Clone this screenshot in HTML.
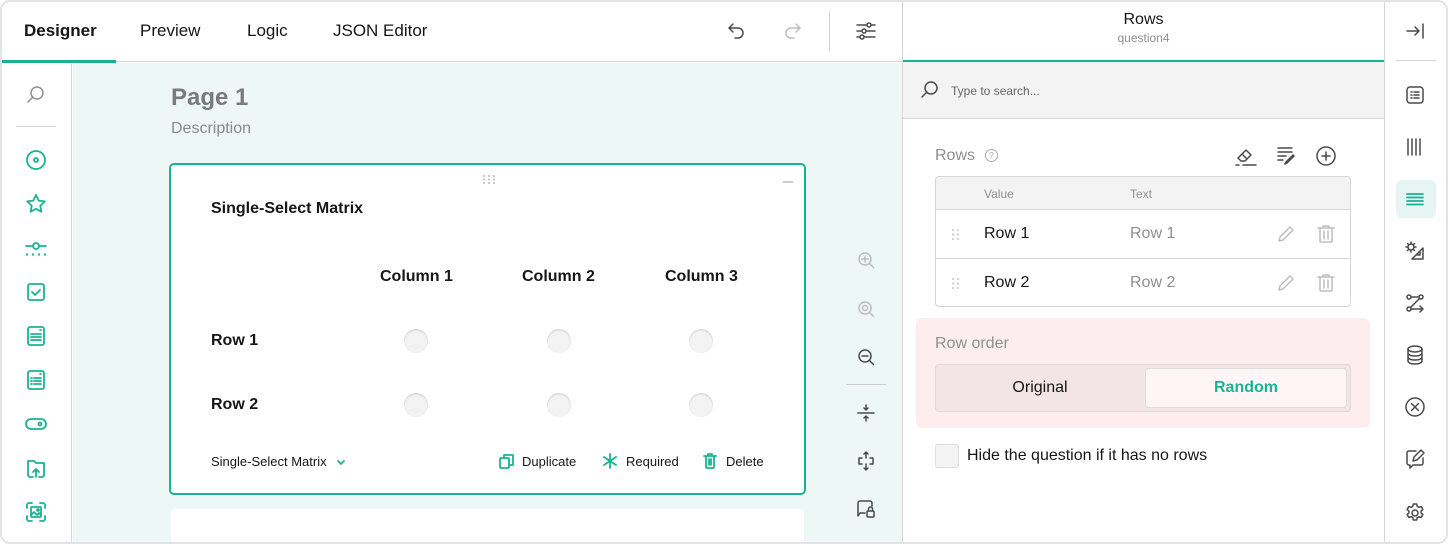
<!DOCTYPE html>
<html><head><meta charset="utf-8"><style>
*{box-sizing:border-box;margin:0;padding:0}
body{width:1448px;height:544px;overflow:hidden;background:#fff;font-family:"Liberation Sans",sans-serif;color:#161616;position:relative}
.a{position:absolute}
.frame{position:absolute;left:0;top:0;width:1448px;height:544px;border:2px solid #e4e4e4;border-radius:10px;pointer-events:none;z-index:10}
svg{position:absolute;fill:none;stroke-linecap:round;stroke-linejoin:round}
.g{stroke:#19b394;stroke-width:1.8}
.d{stroke:#4a4a4a;stroke-width:1.5}
.l{stroke:#bdbdbd;stroke-width:1.5}
</style></head><body>
<!-- header -->
<div class="a" style="left:0;top:0;width:902px;height:62px;border-bottom:1px solid #d6d6d6;background:#fff"></div>
<div class="a" style="left:0;top:60px;width:116px;height:3px;background:#19b394"></div>
<div class="a" style="left:24px;top:21px;font-size:17px;font-weight:bold">Designer</div>
<div class="a" style="left:140px;top:21px;font-size:17px">Preview</div>
<div class="a" style="left:247px;top:21px;font-size:17px">Logic</div>
<div class="a" style="left:333px;top:21px;font-size:17px">JSON Editor</div>
<svg style="left:724px;top:20px" width="24" height="24" class="d"><path d="M5 8h9a5 5 0 0 1 0 10h-3M5 8l4-4M5 8l4 4"/></svg>
<svg style="left:781px;top:20px" width="24" height="24" class="l"><path d="M19 8h-9a5 5 0 0 0 0 10h3M19 8l-4-4M19 8l-4 4"/></svg>
<div class="a" style="left:829px;top:11px;width:1px;height:40px;background:#d6d6d6"></div>
<svg style="left:854px;top:19px" width="24" height="24" class="d"><path d="M3 6h18M3 12h18M3 18h18"/><circle cx="15" cy="6" r="2" fill="#fff"/><circle cx="10" cy="12" r="2" fill="#fff"/><circle cx="8" cy="18" r="2" fill="#fff"/></svg>
<!-- left toolbar -->
<div class="a" style="left:0;top:63px;width:72px;height:481px;background:#fff;border-right:1px solid #d6d6d6"></div>
<svg style="left:24px;top:83px" width="24" height="24"><circle cx="13" cy="10" r="6" stroke="#909090" stroke-width="1.5"/><path d="M9 14l-5 5" stroke="#909090" stroke-width="1.5"/></svg>
<div class="a" style="left:16px;top:126px;width:40px;height:1px;background:#d6d6d6"></div>
<svg style="left:24px;top:148px" width="24" height="24" class="g"><circle cx="12" cy="12" r="9"/><circle cx="12" cy="12" r="2"/></svg>
<svg style="left:24px;top:192px" width="24" height="24" class="g"><path d="M12 3l2.7 5.6 6.1.8-4.5 4.2 1.1 6.1L12 16.8l-5.4 2.9 1.1-6.1-4.5-4.2 6.1-.8z"/></svg>
<svg style="left:24px;top:236px" width="24" height="24" class="g"><path d="M2 10h7M15 10h7M3 18v1M9 18v1M15 18v1M21 18v1"/><circle cx="12" cy="10" r="3"/></svg>
<svg style="left:24px;top:280px" width="24" height="24" class="g"><rect x="4" y="4" width="16" height="16" rx="2"/><path d="M8 12l3 3 5-5"/></svg>
<svg style="left:24px;top:324px" width="24" height="24" class="g"><rect x="4" y="3" width="16" height="18" rx="2"/><path d="M7 10h10M7 13h10M7 16h10M16 6h1"/></svg>
<svg style="left:24px;top:368px" width="24" height="24" class="g"><rect x="4" y="3" width="16" height="18" rx="2"/><path d="M7 10h1M10 10h7M7 13h1M10 13h7M7 16h1M10 16h7M16 6h1"/></svg>
<svg style="left:24px;top:412px" width="24" height="24" class="g"><rect x="2" y="7" width="20" height="10" rx="5"/><circle cx="16" cy="12" r="1.5"/></svg>
<svg style="left:24px;top:456px" width="24" height="24" class="g"><path d="M4 5h6l2 2h8v12a2 2 0 0 1-2 2h-3M9 21H6a2 2 0 0 1-2-2V5M12 21v-8M9 16l3-3 3 3"/></svg>
<svg style="left:24px;top:500px" width="24" height="24" class="g"><path d="M3 8V5a2 2 0 0 1 2-2h3M16 3h3a2 2 0 0 1 2 2v3M21 16v3a2 2 0 0 1-2 2h-3M8 21H5a2 2 0 0 1-2-2v-3"/><rect x="7" y="7" width="10" height="10" rx="1"/><path d="M7 15l3-3 3 3 2-2 2 2"/><circle cx="14" cy="10" r="1"/></svg>
<!-- canvas -->
<div class="a" style="left:73px;top:63px;width:829px;height:481px;background:#edf7f5"></div>
<div class="a" style="left:171px;top:84px;font-size:24px;font-weight:bold;color:#7a7a7a">Page 1</div>
<div class="a" style="left:171px;top:120px;font-size:16px;color:#8a8a8a">Description</div>
<div class="a" style="left:169px;top:163px;width:637px;height:332px;background:#fff;border:2px solid #19b394;border-radius:5px"></div>
<svg style="left:481px;top:174px" width="16" height="10"><g fill="#bbb"><circle cx="3" cy="2" r="1"/><circle cx="8" cy="2" r="1"/><circle cx="13" cy="2" r="1"/><circle cx="3" cy="5.5" r="1"/><circle cx="8" cy="5.5" r="1"/><circle cx="13" cy="5.5" r="1"/><circle cx="3" cy="9" r="1"/><circle cx="8" cy="9" r="1"/><circle cx="13" cy="9" r="1"/></g></svg>
<div class="a" style="left:783px;top:181px;width:10px;height:2px;background:#ccc"></div>
<div class="a" style="left:211px;top:200px;font-size:16px;font-weight:600">Single-Select Matrix</div>
<div class="a" style="left:380px;top:268px;font-size:16px;font-weight:600">Column 1</div>
<div class="a" style="left:522px;top:268px;font-size:16px;font-weight:600">Column 2</div>
<div class="a" style="left:665px;top:268px;font-size:16px;font-weight:600">Column 3</div>
<div class="a" style="left:211px;top:332px;font-size:16px;font-weight:600">Row 1</div>
<div class="a" style="left:211px;top:396px;font-size:16px;font-weight:600">Row 2</div>
<div class="a" style="left:404px;top:329px;width:24px;height:24px;border-radius:50%;background:#f3f3f3;box-shadow:inset 0 1px 2px rgba(0,0,0,.15)"></div>
<div class="a" style="left:547px;top:329px;width:24px;height:24px;border-radius:50%;background:#f3f3f3;box-shadow:inset 0 1px 2px rgba(0,0,0,.15)"></div>
<div class="a" style="left:689px;top:329px;width:24px;height:24px;border-radius:50%;background:#f3f3f3;box-shadow:inset 0 1px 2px rgba(0,0,0,.15)"></div>
<div class="a" style="left:404px;top:393px;width:24px;height:24px;border-radius:50%;background:#f3f3f3;box-shadow:inset 0 1px 2px rgba(0,0,0,.15)"></div>
<div class="a" style="left:547px;top:393px;width:24px;height:24px;border-radius:50%;background:#f3f3f3;box-shadow:inset 0 1px 2px rgba(0,0,0,.15)"></div>
<div class="a" style="left:689px;top:393px;width:24px;height:24px;border-radius:50%;background:#f3f3f3;box-shadow:inset 0 1px 2px rgba(0,0,0,.15)"></div>
<div class="a" style="left:211px;top:454px;font-size:13px">Single-Select Matrix</div>
<svg style="left:335px;top:456px" width="12" height="12" class="g"><path d="M3 5l3 3 3-3"/></svg>
<svg style="left:498px;top:452px" width="18" height="18" class="g"><rect x="2" y="6" width="9" height="10" rx="1"/><path d="M6 6V3h9v10h-4"/></svg>
<div class="a" style="left:522px;top:454px;font-size:13px">Duplicate</div>
<svg style="left:601px;top:452px" width="18" height="18" class="g"><path d="M9 2v14M3 5l12 8M15 5L3 13"/></svg>
<div class="a" style="left:626px;top:454px;font-size:13px">Required</div>
<svg style="left:701px;top:452px" width="18" height="18" class="g"><path d="M3 4h12M7 4V2h4v2M5 4v11a1 1 0 0 0 1 1h6a1 1 0 0 0 1-1V4M8 7v6M10 7v6"/></svg>
<div class="a" style="left:726px;top:454px;font-size:13px">Delete</div>
<div class="a" style="left:171px;top:509px;width:633px;height:40px;background:#fff;border-radius:4px"></div>
<!-- zoom tools -->
<svg style="left:854px;top:248px" width="24" height="24" class="l"><circle cx="11" cy="11" r="6"/><path d="M15.5 15.5l4 4M11 8v6M8 11h6"/></svg>
<svg style="left:854px;top:297px" width="24" height="24" class="l"><circle cx="11" cy="11" r="6"/><circle cx="11" cy="11" r="2.5"/><path d="M15.5 15.5l4 4"/></svg>
<svg style="left:854px;top:345px" width="24" height="24" class="d"><circle cx="11" cy="11" r="6"/><path d="M15.5 15.5l4 4M8 11h6"/></svg>
<div class="a" style="left:846px;top:384px;width:40px;height:1px;background:#ccc"></div>
<svg style="left:854px;top:401px" width="24" height="24" class="d"><path d="M4 12h16M12 4v5M10 7l2 2 2-2M12 20v-5M10 17l2-2 2 2"/></svg>
<svg style="left:854px;top:449px" width="24" height="24" class="d"><path d="M12 3v6M10 5l2-2 2 2M12 21v-6M10 19l2 2 2-2M8 9H5v6h3M16 9h3v6h-3"/></svg>
<svg style="left:854px;top:497px" width="24" height="24" class="d"><path d="M11 16H6l-2 3V6a2 2 0 0 1 2-2h10a2 2 0 0 1 2 2v3"/><rect x="13" y="14" width="7" height="6" rx="1"/><path d="M14.5 14v-2a2 2 0 0 1 4 0v2"/></svg>
<!-- right panel -->
<div class="a" style="left:902px;top:0;width:1px;height:544px;background:#d6d6d6"></div>
<div class="a" style="left:903px;top:0;width:481px;height:60px;background:#fff;text-align:center">
 <div style="margin-top:11px;font-size:16px">Rows</div>
 <div style="font-size:12px;color:#909090;margin-top:2px">question4</div>
</div>
<div class="a" style="left:903px;top:60px;width:481px;height:2px;background:#19b394"></div>
<div class="a" style="left:903px;top:62px;width:481px;height:57px;background:#f3f3f3;border-bottom:1px solid #d6d6d6"></div>
<svg style="left:918px;top:78px" width="24" height="24" class="d"><circle cx="13" cy="10" r="6"/><path d="M9 14l-5 5"/></svg>
<div class="a" style="left:951px;top:84px;font-size:12px;color:#666">Type to search...</div>
<div class="a" style="left:935px;top:147px;font-size:16px;color:#909090">Rows</div>
<div class="a" style="left:985px;top:149px;width:13px;height:13px;border:1.3px solid #aaa;border-radius:50%;font-size:8px;color:#aaa;text-align:center;line-height:11px">?</div>
<svg style="left:1233px;top:144px" width="26" height="24" class="d"><path d="M5 14l8-8 5 5-6 6H8zM9 10l5 5M3 21h3M10 21h13"/></svg>
<svg style="left:1275px;top:144px" width="24" height="24" class="d"><path d="M3 4h14M3 8h14M3 12h8M3 16h5M19 12l-7 7-2 1 1-2 7-7z"/></svg>
<svg style="left:1314px;top:144px" width="24" height="24" class="d"><circle cx="12" cy="12" r="9"/><path d="M12 8v8M8 12h8"/></svg>
<div class="a" style="left:935px;top:176px;width:416px;height:131px;border:1px solid #d6d6d6;border-radius:4px;overflow:hidden">
 <div style="height:33px;background:#f3f3f3;border-bottom:1px solid #d6d6d6;font-size:12px;color:#909090;position:relative"><span class="a" style="left:48px;top:10px">Value</span><span class="a" style="left:194px;top:10px">Text</span></div>
 <div style="height:49px;border-bottom:1px solid #d6d6d6;position:relative;font-size:16px"><span class="a" style="left:48px;top:15px">Row 1</span><span class="a" style="left:194px;top:15px;color:#909090">Row 1</span></div>
 <div style="height:48px;position:relative;font-size:16px"><span class="a" style="left:48px;top:15px">Row 2</span><span class="a" style="left:194px;top:15px;color:#909090">Row 2</span></div>
</div>
<svg style="left:951px;top:228px" width="10" height="14"><g fill="#c8c8c8"><circle cx="2" cy="2" r="1"/><circle cx="7" cy="2" r="1"/><circle cx="2" cy="6.5" r="1"/><circle cx="7" cy="6.5" r="1"/><circle cx="2" cy="11" r="1"/><circle cx="7" cy="11" r="1"/></g></svg>
<svg style="left:951px;top:277px" width="10" height="14"><g fill="#c8c8c8"><circle cx="2" cy="2" r="1"/><circle cx="7" cy="2" r="1"/><circle cx="2" cy="6.5" r="1"/><circle cx="7" cy="6.5" r="1"/><circle cx="2" cy="11" r="1"/><circle cx="7" cy="11" r="1"/></g></svg>
<svg style="left:1275px;top:223px" width="22" height="22" class="l"><path d="M15 4l3 3-10 10-4 1 1-4z"/></svg>
<svg style="left:1315px;top:223px" width="22" height="22" class="l"><path d="M3 5h16M8 5V3h6v2M5 5v13a1 1 0 0 0 1 1h10a1 1 0 0 0 1-1V5M9 8v8M13 8v8"/></svg>
<svg style="left:1275px;top:272px" width="22" height="22" class="l"><path d="M15 4l3 3-10 10-4 1 1-4z"/></svg>
<svg style="left:1315px;top:272px" width="22" height="22" class="l"><path d="M3 5h16M8 5V3h6v2M5 5v13a1 1 0 0 0 1 1h10a1 1 0 0 0 1-1V5M9 8v8M13 8v8"/></svg>
<div class="a" style="left:916px;top:318px;width:454px;height:110px;background:#fdedef;border-radius:6px"></div>
<div class="a" style="left:935px;top:335px;font-size:16px;color:#909090">Row order</div>
<div class="a" style="left:935px;top:364px;width:416px;height:48px;background:#f3e4e6;border:1px solid #ddd;border-radius:4px"></div>
<div class="a" style="left:935px;top:379px;width:210px;text-align:center;font-size:16px">Original</div>
<div class="a" style="left:1145px;top:368px;width:202px;height:40px;background:#fff5f6;border:1px solid #ddd;border-radius:4px;text-align:center;line-height:38px;font-size:16px;font-weight:600;color:#19b394">Random</div>
<div class="a" style="left:935px;top:444px;width:24px;height:24px;background:#f3f3f3;border:1px solid #ddd;border-radius:3px"></div>
<div class="a" style="left:967px;top:447px;font-size:16px">Hide the question if it has no rows</div>
<!-- right icon bar -->
<div class="a" style="left:1384px;top:0;width:1px;height:544px;background:#d6d6d6"></div>
<svg style="left:1403px;top:19px" width="24" height="24" class="d"><path d="M4 12h12M12 8l4 4-4 4M20 5v14"/></svg>
<div class="a" style="left:1396px;top:60px;width:40px;height:1px;background:#d6d6d6"></div>
<svg style="left:1403px;top:83px" width="24" height="24" class="d"><rect x="4" y="4" width="16" height="16" rx="3"/><path d="M8 9h1M11 9h5M8 12h1M11 12h5M8 15h1M11 15h5"/></svg>
<svg style="left:1403px;top:135px" width="24" height="24" class="d"><path d="M5 4v16M9 4v16M13 4v16M17 4v16"/></svg>
<div class="a" style="left:1396px;top:180px;width:40px;height:38px;background:#e6f5f1;border-radius:6px"></div>
<svg style="left:1403px;top:187px" width="24" height="24" class="g"><path d="M4 7h16M4 10.5h16M4 14h16M4 17.5h16"/></svg>
<svg style="left:1403px;top:239px" width="24" height="24" class="d"><path d="M20 9v11H9zM14 16h3v-3"/><circle cx="8" cy="8" r="3"/><path d="M8 3v2M8 11v2M3 8h2M11 8h2M4.5 4.5l1.4 1.4M10.1 10.1l1.4 1.4M4.5 11.5l1.4-1.4M10.1 5.9l1.4-1.4"/></svg>
<svg style="left:1403px;top:291px" width="24" height="24" class="d"><circle cx="6" cy="6" r="2"/><circle cx="18" cy="6" r="2"/><circle cx="6" cy="18" r="2"/><path d="M8 6h8M16.5 7.5L7.5 16.5M8 18h12M17 15l3 3-3 3"/></svg>
<svg style="left:1403px;top:343px" width="24" height="24" class="d"><ellipse cx="12" cy="6" rx="7" ry="3"/><path d="M5 6v12c0 1.7 3 3 7 3s7-1.3 7-3V6M5 10c0 1.7 3 3 7 3s7-1.3 7-3M5 14c0 1.7 3 3 7 3s7-1.3 7-3"/></svg>
<svg style="left:1403px;top:395px" width="24" height="24" class="d"><circle cx="12" cy="12" r="9"/><path d="M8.5 8.5l7 7M15.5 8.5l-7 7"/></svg>
<svg style="left:1403px;top:447px" width="24" height="24" class="d"><path d="M13 4H6a2 2 0 0 0-2 2v10a2 2 0 0 0 2 2h1v3l3-3h8a2 2 0 0 0 2-2v-5M18 3l3 3-7 7-4 1 1-4z"/></svg>
<svg style="left:1403px;top:501px" width="24" height="24" class="d"><circle cx="12" cy="12" r="3"/><path d="M10.3 3h3.4l.5 2.3 1.8 1 2.2-.8 1.7 3-1.8 1.5v2l1.8 1.5-1.7 3-2.2-.8-1.8 1-.5 2.3h-3.4l-.5-2.3-1.8-1-2.2.8-1.7-3 1.8-1.5v-2L4.1 8.5l1.7-3 2.2.8 1.8-1z"/></svg>
<div class="frame"></div>
</body></html>
